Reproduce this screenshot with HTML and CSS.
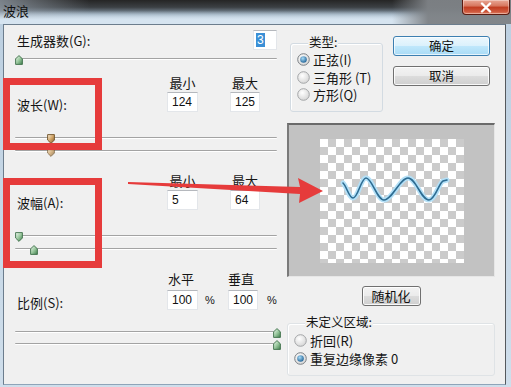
FILE: index.html
```html
<!DOCTYPE html>
<html lang="zh-CN">
<head>
<meta charset="utf-8">
<title>波浪</title>
<link rel="stylesheet" href="styles.css">
</head>
<body>
<svg class="defs" width="0" height="0" aria-hidden="true">
  <defs>
    <linearGradient id="gGreen" x1="0" y1="0" x2="1" y2="1">
      <stop offset="0" stop-color="#f4fbf4"/>
      <stop offset="0.5" stop-color="#9bc99f"/>
      <stop offset="1" stop-color="#3f7d4b"/>
    </linearGradient>
    <linearGradient id="gTan" x1="0" y1="0" x2="1" y2="1">
      <stop offset="0" stop-color="#fbf1dc"/>
      <stop offset="0.5" stop-color="#d2a567"/>
      <stop offset="1" stop-color="#7c5a2c"/>
    </linearGradient>
    <radialGradient id="gRadio" cx="0.4" cy="0.35" r="0.7">
      <stop offset="0" stop-color="#ffffff"/>
      <stop offset="1" stop-color="#d4d4d4"/>
    </radialGradient>
    <radialGradient id="gDot" cx="0.4" cy="0.35" r="0.7">
      <stop offset="0" stop-color="#a8dcf8"/>
      <stop offset="1" stop-color="#1d5f93"/>
    </radialGradient>
    <symbol id="thumbUp" viewBox="0 0 8 10">
      <path d="M4 0.6 L7.4 3.8 V9.4 H0.6 V3.8 Z" stroke="#3c6e47" stroke-width="0.9" fill="url(#gGreen)"/>
    </symbol>
    <symbol id="thumbDown" viewBox="0 0 8 10">
      <path d="M0.6 0.6 H7.4 V6 L4 9.4 L0.6 6 Z" stroke="#3c6e47" stroke-width="0.9" fill="url(#gGreen)"/>
    </symbol>
    <symbol id="thumbTan" viewBox="0 0 8 10">
      <path d="M0.6 0.6 H7.4 V6 L4 9.4 L0.6 6 Z" stroke="#6d4f25" stroke-width="0.9" fill="url(#gTan)"/>
    </symbol>
    <symbol id="radioOff" viewBox="0 0 13 13">
      <circle cx="6.5" cy="6.5" r="5.8" fill="url(#gRadio)" stroke="#a4a6a8" stroke-width="1"/>
    </symbol>
    <symbol id="radioOn" viewBox="0 0 13 13">
      <circle cx="6.5" cy="6.5" r="5.8" fill="url(#gRadio)" stroke="#7c8185" stroke-width="1"/>
      <circle cx="6.5" cy="6.5" r="3.3" fill="url(#gDot)"/>
    </symbol>
  </defs>
</svg>

<div class="window">
  <header class="titlebar">
    <span class="title">波浪</span>
    <span class="close" aria-label="关闭">
      <svg width="14" height="11" viewBox="0 0 14 11"><path d="M3 1.5 L11 9.5 M11 1.5 L3 9.5" stroke="#ffffff" stroke-width="2.4" stroke-linecap="round"/></svg>
    </span>
  </header>

  <main class="client">
    <section class="left">
      <div class="gen">
        <div class="gen-row">
          <span class="lbl">生成器数(G):</span>
          <span class="input gen-input"><span class="sel">3</span></span>
        </div>
        <div class="track gen-track"><svg class="thumb" style="left:0px"><use href="#thumbUp"/></svg></div>
      </div>

      <div class="param p-w">
        <div class="heads"><span class="h1">最小</span><span class="h2">最大</span></div>
        <div class="vals">
          <span class="lbl">波长(W):</span>
          <span class="input in1">124</span>
          <span class="input in2">125</span>
        </div>
        <div class="track tr1"><svg class="thumb" style="left:32px"><use href="#thumbTan"/></svg></div>
        <div class="track tr2"><svg class="thumb dim" style="left:32px"><use href="#thumbTan"/></svg></div>
      </div>

      <div class="param p-a">
        <div class="heads"><span class="h1">最小</span><span class="h2">最大</span></div>
        <div class="vals">
          <span class="lbl">波幅(A):</span>
          <span class="input in1">5</span>
          <span class="input in2">64</span>
        </div>
        <div class="track tr1"><svg class="thumb" style="left:0px"><use href="#thumbDown"/></svg></div>
        <div class="track tr2"><svg class="thumb" style="left:15px"><use href="#thumbUp"/></svg></div>
      </div>

      <div class="param p-s">
        <div class="heads"><span class="h1">水平</span><span class="h2">垂直</span></div>
        <div class="vals">
          <span class="lbl">比例(S):</span>
          <span class="input in1">100</span>
          <span class="pct p1">%</span>
          <span class="input in2">100</span>
          <span class="pct p2">%</span>
        </div>
        <div class="track tr1"><svg class="thumb" style="left:258px"><use href="#thumbUp"/></svg></div>
        <div class="track tr2"><svg class="thumb" style="left:258px"><use href="#thumbUp"/></svg></div>
      </div>
    </section>

    <section class="right">
      <div class="top-row">
        <div class="group type-group">
          <span class="legend">类型:</span>
          <label class="radio first"><svg class="rb"><use href="#radioOn"/></svg>正弦(I)</label>
          <label class="radio"><svg class="rb"><use href="#radioOff"/></svg>三角形 (T)</label>
          <label class="radio"><svg class="rb"><use href="#radioOff"/></svg>方形(Q)</label>
        </div>
        <div class="buttons">
          <span class="btn default">确定</span>
          <span class="btn">取消</span>
        </div>
      </div>

      <div class="preview">
        <div class="checker">
          <svg class="wave" width="144" height="124" viewBox="0 0 144 124">
            <path d="M23 44 C27 48 29 59 33 59 C38 59 41 39 46 39 C52 39 57 61 64 61 C72 61 80 39 88 39 C96 39 101 61 109 61 C115 61 119 44 123 42 L127 41" stroke="#b4e0f7" stroke-width="5" fill="none" stroke-linecap="round"/>
            <path d="M23 44 C27 48 29 59 33 59 C38 59 41 39 46 39 C52 39 57 61 64 61 C72 61 80 39 88 39 C96 39 101 61 109 61 C115 61 119 44 123 42 L127 41" stroke="#2d6c92" stroke-width="1.6" fill="none" stroke-linecap="round"/>
          </svg>
        </div>
      </div>

      <span class="btn random">随机化</span>

      <div class="group undef-group">
        <span class="legend">未定义区域:</span>
        <label class="radio first"><svg class="rb"><use href="#radioOff"/></svg>折回(R)</label>
        <label class="radio"><svg class="rb"><use href="#radioOn"/></svg>重复边缘像素 0</label>
      </div>
    </section>
  </main>
</div>

<div class="mark mark-w"></div>
<div class="mark mark-a"></div>
<svg class="arrow" width="511" height="387" viewBox="0 0 511 387">
  <polygon points="128,182 300,187 298,178 323,191 299,203 300,194 128,184" fill="#e63b3b"/>
</svg>
</body>
</html>
```

FILE: styles.css
```css
* {
  box-sizing: border-box;
  margin: 0;
  padding: 0;
}

html, body {
  width: 511px;
  height: 387px;
  overflow: hidden;
}

body {
  position: relative;
  background: #c7d7e6;
  font-family: "Noto Sans CJK SC", "Liberation Sans", sans-serif;
  font-size: 13px;
  color: #151515;
}

.defs {
  position: absolute;
  width: 0;
  height: 0;
}

.window {
  width: 511px;
  height: 387px;
  display: flex;
  flex-direction: column;
  background: linear-gradient(to bottom, #bccfe0, #cfdeeb);
}

/* ---------- title bar ---------- */
.titlebar {
  height: 24px;
  flex: none;
  display: flex;
  align-items: flex-start;
  background:
    linear-gradient(to right, rgba(126,130,134,0) 392px, rgba(126,130,134,0.96) 428px),
    linear-gradient(to bottom, rgba(214,228,240,0) 45%, rgba(214,228,240,1) 82%),
    linear-gradient(to right, rgba(150,160,170,0.75) 0, rgba(150,160,170,0) 90px),
    linear-gradient(to bottom, #252525 0, #3c4044 30%, #8fa3b4 62%, #d2e1ee 90%);
}

.title {
  padding: 2px 0 0 3px;
  font-size: 13px;
  line-height: 17px;
  color: #101010;
}

.close {
  margin-left: auto;
  margin-right: 1px;
  width: 48px;
  height: 15px;
  display: flex;
  align-items: center;
  justify-content: center;
  border: 1px solid #5a1a10;
  border-top: none;
  border-radius: 0 0 4px 4px;
  background: linear-gradient(to bottom, #e9a795 0, #d7775f 42%, #c13d21 52%, #cf5a3f 85%, #e48a6c 100%);
  box-shadow: inset 0 0 0 1px rgba(255,255,255,0.35);
}

/* ---------- client ---------- */
.client {
  margin-left: 3px;
  width: 503px;
  height: 361px;
  flex: none;
  display: flex;
  gap: 10px;
  padding-left: 11px;
  background: #f0f0f0;
  border: 1px solid #6c7d8d;
  border-right-color: #55595d;
  border-bottom-color: #8ea4b8;
}

.left {
  width: 262px;
  flex: none;
  display: flex;
  flex-direction: column;
}

.lbl {
  padding-left: 2px;
  white-space: nowrap;
}

.input {
  display: block;
  height: 20px;
  background: #ffffff;
  border: 1px solid #e3e6ea;
  border-top-color: #b5b8bd;
  font-family: "Liberation Sans", sans-serif;
  font-size: 12px;
  line-height: 18px;
  padding-left: 4px;
  color: #111;
}

.gen {
  padding-top: 5px;
}

.gen-row {
  display: flex;
  height: 20px;
}

.gen-row .lbl {
  flex: 1;
  padding-top: 3px;
  line-height: 16px;
}

.gen-input {
  width: 24px;
  padding-left: 2px;
  padding-top: 2px;
  line-height: 14px;
}

.sel {
  display: inline-block;
  background: #3a8fd6;
  color: #ffffff;
  padding: 0 1px;
  line-height: 14px;
}

.track {
  position: relative;
  height: 2px;
  border-top: 1px solid #a3a3a3;
  border-bottom: 1px solid #ffffff;
  border-radius: 1px;
}

.gen-track {
  margin-top: 8px;
}

.thumb {
  position: absolute;
  top: -4px;
  width: 8px;
  height: 10px;
}

.thumb.dim {
  opacity: 0.75;
}

.heads,
.vals {
  display: grid;
  grid-template-columns: 152px 31px 32px 30px;
}

.heads {
  height: 18px;
  line-height: 18px;
}

.heads .h1 {
  grid-column: 2;
  text-align: center;
}

.heads .h2 {
  grid-column: 4;
  text-align: center;
}

.vals {
  height: 20px;
}

.vals .lbl {
  padding-top: 5px;
  line-height: 15px;
}

.vals .in1 {
  grid-column: 2;
}

.vals .in2 {
  grid-column: 4;
}

.p-w {
  margin-top: 14px;
}

.p-a {
  margin-top: 20px;
}

.p-s {
  margin-top: 20px;
}

.p-s .heads,
.p-s .vals {
  grid-template-columns: 152px 31px 30px 30px 20px;
}

.p-s .heads {
  height: 20px;
}

.p-s .heads .h1 {
  text-align: left;
  padding-left: 1px;
}

.p-s .heads .h2 {
  text-align: left;
}

.pct {
  font-family: "Liberation Sans", sans-serif;
  font-size: 11px;
  line-height: 20px;
}

.pct.p1 {
  grid-column: 3;
  padding-left: 7px;
}

.pct.p2 {
  grid-column: 5;
  padding-left: 9px;
}

.param .tr1 {
  margin-top: 25px;
}

.param .tr2 {
  margin-top: 11px;
}

.p-s .tr1 {
  margin-top: 21px;
}

.p-s .tr2 {
  margin-top: 10px;
}

/* ---------- right column ---------- */
.right {
  width: 208px;
  flex: none;
  display: flex;
  flex-direction: column;
}

.top-row {
  display: flex;
  gap: 10px;
  padding-left: 3px;
}

.group {
  display: flex;
  flex-direction: column;
  border: 1px solid #d3dbe2;
  border-radius: 3px;
  padding-left: 6px;
  box-shadow: inset 1px 1px 0 #ffffff;
}

.legend {
  align-self: flex-start;
  margin: -9px 0 0 11px;
  padding: 0 1px;
  background: #f0f0f0;
  font-size: 12.5px;
  line-height: 14px;
  height: 14px;
}

.radio {
  display: flex;
  align-items: center;
  gap: 3px;
  height: 17.5px;
  line-height: 15px;
  white-space: nowrap;
}

.radio.first {
  margin-top: 2px;
}

.rb {
  width: 13px;
  height: 13px;
  flex: none;
}

.type-group {
  width: 93px;
  height: 69px;
  margin-top: 18px;
}

.buttons {
  display: flex;
  flex-direction: column;
  gap: 10px;
  margin-top: 11px;
}

.btn {
  display: block;
  width: 97px;
  height: 20px;
  border: 1px solid #707070;
  border-radius: 3px;
  background: linear-gradient(to bottom, #f3f3f3 0, #ebebeb 48%, #dcdcdc 52%, #cfcfcf 100%);
  box-shadow: inset 0 0 0 1px rgba(255,255,255,0.85);
  text-align: center;
  font-size: 12.5px;
  line-height: 18px;
  color: #111;
}

.btn.default {
  border-color: #3c7fb1;
  background: linear-gradient(to bottom, #ecf7fd 0, #dbf1fc 48%, #bfe7fb 52%, #a9dbf6 100%);
  box-shadow: inset 0 0 0 1px rgba(255,255,255,0.7);
}

.preview {
  margin-top: 11px;
  width: 208px;
  height: 154px;
  display: flex;
  align-items: center;
  justify-content: center;
  background: #c2c2c2;
  border: 1px solid #e6e6e6;
  border-top: 2px solid #6a6a6a;
  border-left: 2px solid #7a7a7a;
}

.checker {
  width: 144px;
  height: 124px;
  background: repeating-conic-gradient(#cbcbcb 0 25%, #ffffff 0 50%) 0 0 / 16px 16px;
}

.wave {
  display: block;
}

.btn.random {
  align-self: center;
  width: 59px;
  margin-top: 9px;
  font-size: 13px;
}

.undef-group {
  margin-top: 17px;
  height: 53px;
  border-color: #dfe3e6;
}

.undef-group .radio {
  height: 18.5px;
}

/* ---------- annotations ---------- */
.mark {
  position: absolute;
  left: 3px;
  width: 99px;
  border: 7px solid #e63b3b;
}

.mark-w {
  top: 78px;
  height: 72px;
}

.mark-a {
  top: 178px;
  height: 90px;
}

.arrow {
  position: absolute;
  left: 0;
  top: 0;
  pointer-events: none;
}
```
